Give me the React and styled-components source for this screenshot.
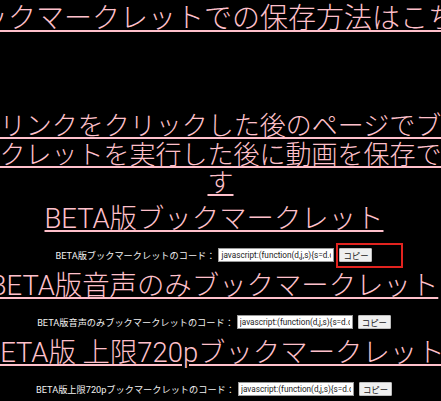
import React from 'react';
import styled, { createGlobalStyle } from 'styled-components';

const GlobalStyle = createGlobalStyle`
  html, body {
    margin: 0;
    padding: 0;
    background: #000;
    overflow: hidden;
  }
`;

const Page = styled.div`
  display: flex;
  flex-direction: column;
  align-items: center;
  width: 428px;
  padding-right: 13px;
  min-height: 401px;
  background: #000;
  font-family: "Noto Sans CJK JP", sans-serif;
`;

const PinkLink = styled.a`
  display: block;
  color: pink;
  text-decoration: underline;
  font-weight: 300;
  text-align: center;
`;

const Title = styled(PinkLink)`
  font-family: Roboto, "Noto Sans CJK JP", sans-serif;
  font-size: ${props => props.size}px;
  line-height: 30px;
  padding-top: 4px;
  margin-left: ${props => props.shift || 0}px;
  white-space: nowrap;
`;

const Guide = styled(PinkLink)`
  width: 550px;
  margin: 76px 0 0 13px;
  font-size: 26px;
  line-height: 28.5px;
`;

const Section = styled.section`
  display: flex;
  flex-direction: column;
  align-items: center;
  margin-top: ${props => props.first ? '4px' : '2px'};
`;

const CodeRow = styled.div`
  display: flex;
  align-items: center;
  height: 20px;
  margin-top: 11px;
  white-space: nowrap;
`;

const CodeLabel = styled.span`
  color: #f2f2f2;
  font-family: Roboto, "Noto Sans CJK JP", sans-serif;
  font-size: 9.2px;
  margin-right: 3px;
`;

const CodeInput = styled.input`
  box-sizing: border-box;
  width: 116px;
  height: 14px;
  padding: 0 2px;
  border: 1px solid #9a9a9a;
  background: #fff;
  color: #222;
  font-family: Roboto, "Liberation Sans", sans-serif;
  font-size: 8.2px;
  outline: none;
`;

const CopyWrap = styled.span`
  position: relative;
  display: inline-flex;
  margin-left: 5px;
`;

const CopyButton = styled.button`
  box-sizing: border-box;
  width: 33px;
  height: 14px;
  padding: 0;
  border: 1px solid #bdbdbd;
  border-radius: 1px;
  background: #efefef;
  color: #222;
  font-family: "Noto Sans CJK JP", sans-serif;
  font-size: 8.4px;
  line-height: 12px;
`;

const Highlight = styled.span`
  position: absolute;
  left: -3px;
  top: -5px;
  width: 67px;
  height: 25px;
  box-sizing: border-box;
  border: 2.5px solid #e2231f;
  pointer-events: none;
`;

const CODE = 'javascript:(function(d,j,s){s=d.createElement(j);s.src="https://example.com/bookmarklet.js";d.body.appendChild(s)})(document,"script")';

const bookmarklets = [
  { title: 'BETA版ブックマークレット', highlight: true },
  { title: 'BETA版音声のみブックマークレット' },
  { title: 'BETA版 上限720pブックマークレット' },
];

const App = () => (
  <>
    <GlobalStyle />
    <Page>
      <Title href="#" size={28} shift={8}>ブックマークレットでの保存方法はこちら</Title>
      <Guide href="#">
        このリンクをクリックした後のページでブックマークレットを実行した後に動画を保存できます
      </Guide>
      {bookmarklets.map((b, i) => (
        <Section key={b.title} first={i === 0}>
          <Title href="#" size={27.4}>{b.title}</Title>
          <CodeRow>
            <CodeLabel>{b.title.replace(' ', '')}のコード：</CodeLabel>
            <CodeInput type="text" readOnly value={CODE} />
            <CopyWrap>
              <CopyButton type="button">コピー</CopyButton>
              {b.highlight && <Highlight />}
            </CopyWrap>
          </CodeRow>
        </Section>
      ))}
    </Page>
  </>
);

export default App;
